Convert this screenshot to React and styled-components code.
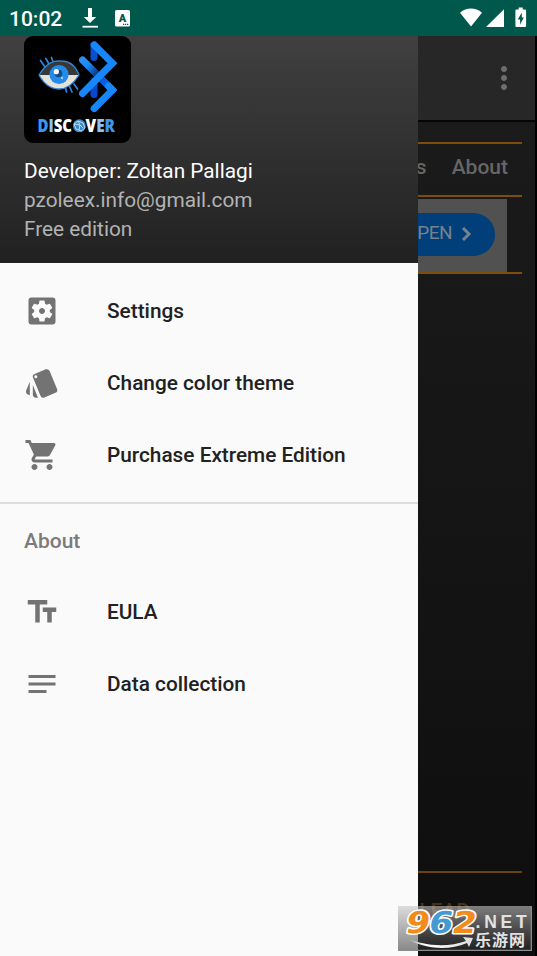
import React from 'react'
import styled, { createGlobalStyle } from 'styled-components'
import {
  MdSettingsApplications,
  MdStyle,
  MdShoppingCart,
  MdTextFields,
  MdNotes,
  MdMoreVert,
} from 'react-icons/md'

const SansFont = `Roboto, "Noto Sans", sans-serif`

const GlobalStyle = createGlobalStyle`
  * {
    box-sizing: border-box;
  }
  body {
    margin: 0;
    font-family: ${SansFont};
  }
  svg {
    display: block;
    flex-shrink: 0;
  }
`

const Screen = styled.div`
  position: relative;
  width: 537px;
  height: 956px;
  overflow: hidden;
  display: flex;
  flex-direction: column;
  background: #000;
`

const StatusBar = styled.header`
  flex: none;
  height: 36px;
  padding: 0 9px;
  display: flex;
  align-items: center;
  background: #00574b;
  color: white;
`
const Clock = styled.span`
  width: 72px;
  font-size: 21px;
  font-weight: 500;
  line-height: 36px;
  padding-top: 1px;
`
const StatusIcons = styled.div`
  display: flex;
  align-items: center;
  gap: 16px;
  ${props => props.$end && `margin-left: auto;`}
`

const Content = styled.main`
  flex: 1;
  width: 535px;
  display: flex;
  flex-direction: column;
  align-items: flex-end;
  background: linear-gradient(#1c1c1c, #0e0e0e);
`
const AppBar = styled.div`
  width: 100%;
  height: 86px;
  flex: none;
  display: flex;
  justify-content: flex-end;
  align-items: center;
  padding: 0 13px 1px 0;
  background: #272727;
  border-bottom: 2px solid #050505;
  color: #6e6e6e;
`
const Tabs = styled.nav`
  width: 522px;
  height: 55px;
  margin: 20px 13px 0 0;
  padding: 0 14px 5px 0;
  display: flex;
  justify-content: flex-end;
  align-items: center;
  gap: 25px;
  border-top: 2px solid #7c4d0b;
  border-bottom: 2px solid #7c4d0b;
  color: #666;
  font-size: 21px;
  font-weight: 500;
`
const AdSlot = styled.div`
  width: 522px;
  height: 77px;
  margin-right: 13px;
  padding: 2px 15px 0 0;
  display: flex;
  border-bottom: 2px solid #7c4d0b;
`
const Ad = styled.div`
  flex: 1;
  display: flex;
  justify-content: flex-end;
  align-items: center;
  padding: 0 12px 2px 0;
  background: #515151;
`
const AdButton = styled.button`
  height: 43px;
  padding: 0 23px 4px 40px;
  display: flex;
  align-items: center;
  gap: 8px;
  border: 0;
  border-radius: 22px;
  background: #003f79;
  color: #76828e;
  font-family: ${SansFont};
  font-size: 19px;
  letter-spacing: -0.5px;

  svg {
    margin-top: 3px;
  }
`
const Footer = styled.div`
  width: 522px;
  height: 85px;
  margin: auto 13px 0 0;
  padding: 26px 52px 0 0;
  border-top: 2px solid #6a420c;
  color: #4a310f;
  font-size: 21px;
  font-weight: 500;
  text-align: right;
`

const Drawer = styled.aside`
  position: absolute;
  top: 36px;
  left: 0;
  bottom: 0;
  width: 418px;
  background: #fafafa;
`
const DrawerHeader = styled.div`
  height: 227px;
  padding-left: 24px;
  background: linear-gradient(#404040, #212121);
`
const Profile = styled.div`
  padding-top: 14px;
`
const ProfileLine = styled.div`
  color: ${props => (props.$strong ? '#fff' : '#b3b3b3')};
  font-size: 20.8px;
  line-height: 29px;
`
const Menu = styled.ul`
  list-style: none;
  margin: 0;
  padding: ${props => (props.$first ? '12px 0 11px' : '0')};
`
const MenuItem = styled.li`
  height: 72px;
  padding-left: 24px;
  display: flex;
  align-items: center;
  gap: 47px;
  color: #212121;
  font-size: 20.8px;
  font-weight: 500;

  svg {
    color: #737373;
  }
`
const MenuHeading = styled.h2`
  height: 74px;
  margin: 0;
  padding-left: 24px;
  border-top: 2px solid #dcdcdc;
  color: #7b7b7b;
  font-size: 21px;
  font-weight: 500;
  line-height: 74px;
`

const Watermark = styled.div`
  position: absolute;
  left: 398px;
  top: 906px;
`

const DownloadIcon = () => (
  <svg width="18" height="22" viewBox="0 0 18 22" fill="white">
    <path d="M7 1h4v9h4.2L9 16 2.8 10H7z" />
    <path d="M1.5 18.8H17v1.8H1.5z" />
  </svg>
)

const KeyboardIcon = () => (
  <svg width="15" height="17" viewBox="0 0 15 17">
    <rect width="15" height="16.5" rx="1.5" fill="white" />
    <text x="7.5" y="12" textAnchor="middle" fontFamily="Roboto" fontWeight="900" fontSize="11" fill="#00574b">
      A
    </text>
    <path d="M8 14.4h6" stroke="#00574b" strokeWidth="1.1" strokeDasharray="1.2 .8" />
  </svg>
)

const SignalIcons = () => (
  <svg width="70" height="22" viewBox="0 0 70 22" fill="white">
    <path d="M2 5.7C8.5.2 17.5.2 24 5.7l-11 13.8z" />
    <path d="M28 20 46 2.3V20z" />
    <path d="M58.5 2.5h2.2v-2h4v2H67a1.1 1.1 0 0 1 1.1 1.1v15.3A1.1 1.1 0 0 1 67 20h-8.5a1.1 1.1 0 0 1-1.1-1.1V3.6a1.1 1.1 0 0 1 1.1-1.1z" />
    <path d="M63.8 5.5l-4 7h2.3v5l3.7-7h-2z" fill="#00574b" />
  </svg>
)

const EyeShape = 'M15 39C21 29 29 24 37 25c9 0 15 6 18 14-5 8-12 14-20 14S20 48 15 39z'

const AppLogo = () => (
  <svg width="107" height="107" viewBox="0 0 107 107">
    <defs>
      <linearGradient id="lower" x1="58" y1="24" x2="89" y2="54" gradientUnits="userSpaceOnUse">
        <stop offset="0" stopColor="#2a8ff0" />
        <stop offset=".2" stopColor="#1687fb" />
        <stop offset=".45" stopColor="#0d3f86" />
        <stop offset=".6" stopColor="#0753df" />
        <stop offset="1" stopColor="#0f70f2" />
      </linearGradient>
      <clipPath id="eye">
        <path d={EyeShape} />
      </clipPath>
    </defs>
    <rect width="107" height="107" rx="9" fill="#000" />
    <g fill="none" strokeLinecap="round" strokeWidth="7">
      <path d="M70 9v12.5" stroke="#0a4fcb" />
      <path d="M70 45v13.5" stroke="#0847cf" />
      <path d="M58.5 24l30 30" stroke="url(#lower)" />
      <path d="M84.5 50l4 4-18.300 18.500" stroke="#1687fb" />
      <path d="M70.200 9l18.300 18.200-30 30.300" stroke="#1687fb" />
    </g>
    <path
      d="M16.5 24.5 21 31M21.8 22.5l3.5 6M27.5 21.500l1.800 5M53.500 53l-3.500-5M48 56l-3-6.500M42.500 56l-1-4.500"
      stroke="#2f86db"
      strokeWidth="1.7"
      strokeLinecap="round"
    />
    <g clipPath="url(#eye)">
      <path d="M14 22h43v17H14z" fill="#383838" />
      <path d="M14 39h43v16H14z" fill="#e5e2d6" />
    </g>
    <path d={EyeShape} fill="none" stroke="#3187d7" strokeWidth="1.3" />
    <circle cx="35" cy="38.5" r="9.6" fill="#248bed" />
    <circle cx="34.5" cy="37.5" r="3.8" fill="#174b83" />
    <circle cx="32.3" cy="35.7" r="2.6" fill="white" />
    <circle cx="38" cy="42" r="1.2" fill="#9bd0ff" />
    <g fontFamily="'Open Sans'" fontWeight="800" fontSize="17">
      <text x="13.5" y="95.8" textLength="34.5" lengthAdjust="spacingAndGlyphs">
        <tspan fill="#3b98ef">D</tspan>
        <tspan fill="#8cc3f6">I</tspan>
        <tspan fill="white">SC</tspan>
      </text>
      <text x="61.5" y="95.8" textLength="29.5" lengthAdjust="spacingAndGlyphs">
        <tspan fill="white">V</tspan>
        <tspan fill="#8cc3f6">E</tspan>
        <tspan fill="#3b98ef">R</tspan>
      </text>
    </g>
    <circle cx="55.3" cy="89.8" r="6.5" fill="#3a88c4" />
    <path d="m50 88 4-3 5 2 2 5-4 3-5-2-2-5 6 1 3 3m-5-7 2 4-1 5" fill="none" stroke="#c8e2f7" strokeWidth=".9" />
  </svg>
)

const SiteMark = () => (
  <svg width="134" height="45" viewBox="0 0 134 45">
    <defs>
      <linearGradient id="plate" x1="0" y1="0" x2="0" y2="1">
        <stop offset="0" stopColor="#c8c8c8" stopOpacity=".6" />
        <stop offset="1" stopColor="#2c2c2c" stopOpacity=".55" />
      </linearGradient>
      <linearGradient id="swoosh">
        <stop offset="0" stopColor="#888" />
        <stop offset=".3" stopColor="#fff" />
        <stop offset="1" stopColor="#ddd" />
      </linearGradient>
    </defs>
    <path d="M0 0h134v45H0z" fill="url(#plate)" />
    <path d="M0 44.3h133.3V0" fill="none" stroke="#8c8c8c" strokeWidth="1.3" />
    <path d="M6 31c19 9 43 11 62 4l-3-4 10 1-4 9-2-4C48 46 23 42 6 31z" fill="url(#swoosh)" />
    <g
      fontFamily="'DejaVu Sans'"
      fontWeight="700"
      fontSize="30"
      stroke="white"
      strokeWidth="3"
      strokeLinejoin="round"
      paintOrder="stroke"
      transform="translate(5.5 0) skewX(-11)"
    >
      <text x="6" y="27" fill="#f28b1c" textLength="24" lengthAdjust="spacingAndGlyphs">9</text>
      <text x="29" y="27" fill="#459ad4" textLength="24" lengthAdjust="spacingAndGlyphs">6</text>
      <text x="52.5" y="27" fill="#f28b1c" textLength="24" lengthAdjust="spacingAndGlyphs">2</text>
    </g>
    <g fill="#e2e2e2" fontWeight="700">
      <text x="77.5" y="21.5" fontFamily="'Liberation Sans'" fontSize="17.5" letterSpacing="3.8">.NET</text>
      <text x="77" y="40" fontFamily="'Noto Sans CJK SC', sans-serif" fontSize="16" textLength="50">乐游网</text>
    </g>
  </svg>
)

const App = () => (
  <Screen>
    <GlobalStyle />
    <StatusBar>
      <Clock>10:02</Clock>
      <StatusIcons>
        <DownloadIcon />
        <KeyboardIcon />
      </StatusIcons>
      <StatusIcons $end>
        <SignalIcons />
      </StatusIcons>
    </StatusBar>
    <Content>
      <AppBar>
        <MdMoreVert size={36} />
      </AppBar>
      <Tabs>
        <span>Devices</span>
        <span>About</span>
      </Tabs>
      <AdSlot>
        <Ad>
          <AdButton>
            OPEN
            <svg width="12" height="16" viewBox="0 0 12 16">
              <path d="m3 2 6 6-6 6" fill="none" stroke="currentColor" strokeWidth="3" />
            </svg>
          </AdButton>
        </Ad>
      </AdSlot>
      <Footer>LEAD</Footer>
    </Content>
    <Drawer>
      <DrawerHeader>
        <AppLogo />
        <Profile>
          <ProfileLine $strong>Developer: Zoltan Pallagi</ProfileLine>
          <ProfileLine>pzoleex.info@gmail.com</ProfileLine>
          <ProfileLine>Free edition</ProfileLine>
        </Profile>
      </DrawerHeader>
      <Menu $first>
        <MenuItem>
          <MdSettingsApplications size={36} />
          Settings
        </MenuItem>
        <MenuItem>
          <MdStyle size={36} />
          Change color theme
        </MenuItem>
        <MenuItem>
          <MdShoppingCart size={36} />
          Purchase Extreme Edition
        </MenuItem>
      </Menu>
      <MenuHeading>About</MenuHeading>
      <Menu>
        <MenuItem>
          <MdTextFields size={36} />
          EULA
        </MenuItem>
        <MenuItem>
          <MdNotes size={36} />
          Data collection
        </MenuItem>
      </Menu>
    </Drawer>
    <Watermark>
      <SiteMark />
    </Watermark>
  </Screen>
)

export default App
